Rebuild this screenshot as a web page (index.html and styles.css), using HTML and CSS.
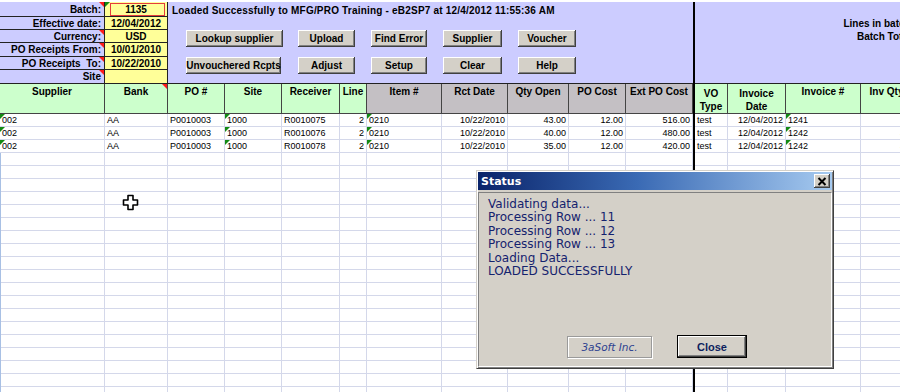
FILE: index.html
```html
<!DOCTYPE html>
<html>
<head>
<meta charset="utf-8">
<link rel="stylesheet" href="styles.css">
</head>
<body>
<div class="sheet">
  <div class="top">
    <div class="mid">
      <div class="msg">Loaded Successfully to MFG/PRO Training - eB2SP7 at 12/4/2012 11:55:36 AM</div>
      <div class="btns">
        <button class="btn c1">Lookup supplier</button>
        <button class="btn c2">Upload</button>
        <button class="btn c3">Find Error</button>
        <button class="btn c4">Supplier</button>
        <button class="btn c5">Voucher</button>
        <button class="btn c1 short">Unvouchered Rcpts</button>
        <button class="btn c2">Adjust</button>
        <button class="btn c3">Setup</button>
        <button class="btn c4">Clear</button>
        <button class="btn c5">Help</button>
      </div>
    </div>
    <div class="vline"></div>
    <div class="right">
      <div class="totals">
        <div>Lines in batch:</div>
        <div>Batch Total:</div>
      </div>
    </div>
    <div class="lbl nr">Batch:</div><div class="val sel ng">1135</div>
    <div class="lbl">Effective date:</div><div class="val">12/04/2012</div>
    <div class="lbl nr">Currency:</div><div class="val">USD</div>
    <div class="lbl nr">PO Receipts From:</div><div class="val">10/01/2010</div>
    <div class="lbl nr">PO Receipts &nbsp;To:</div><div class="val">10/22/2010</div>
    <div class="lbl nr">Site</div><div class="val"></div>
  </div>

  <div class="grid">
    <div class="vline2"></div>
    <div class="h">Supplier</div>
    <div class="h nr">Bank</div>
    <div class="h">PO #</div>
    <div class="h">Site</div>
    <div class="h">Receiver</div>
    <div class="h">Line</div>
    <div class="h g">Item #</div>
    <div class="h g">Rct Date</div>
    <div class="h g">Qty Open</div>
    <div class="h g">PO Cost</div>
    <div class="h g">Ext PO Cost</div>
    <div class="h two">VO<br>Type</div>
    <div class="h two">Invoice<br>Date</div>
    <div class="h">Invoice #</div>
    <div class="h">Inv Qty</div>

    <div class="c ng">002</div><div class="c">AA</div><div class="c">P0010003</div><div class="c ng">1000</div><div class="c">R0010075</div><div class="c r">2</div><div class="c ng">0210</div><div class="c r">10/22/2010</div><div class="c r">43.00</div><div class="c r">12.00</div><div class="c r">516.00</div><div class="c">test</div><div class="c r">12/04/2012</div><div class="c ng">1241</div><div class="c r"></div>

    <div class="c ng">002</div><div class="c">AA</div><div class="c">P0010003</div><div class="c ng">1000</div><div class="c">R0010076</div><div class="c r">2</div><div class="c ng">0210</div><div class="c r">10/22/2010</div><div class="c r">40.00</div><div class="c r">12.00</div><div class="c r">480.00</div><div class="c">test</div><div class="c r">12/04/2012</div><div class="c ng">1242</div><div class="c r">30</div>

    <div class="c ng">002</div><div class="c">AA</div><div class="c">P0010003</div><div class="c ng">1000</div><div class="c">R0010078</div><div class="c r">2</div><div class="c ng">0210</div><div class="c r">10/22/2010</div><div class="c r">35.00</div><div class="c r">12.00</div><div class="c r">420.00</div><div class="c">test</div><div class="c r">12/04/2012</div><div class="c ng">1242</div><div class="c r">30</div>

    <div class="fill first"></div><div class="fill"></div><div class="fill"></div><div class="fill"></div><div class="fill"></div><div class="fill"></div><div class="fill"></div><div class="fill"></div><div class="fill"></div><div class="fill"></div><div class="fill"></div><div class="fill"></div><div class="fill"></div><div class="fill"></div><div class="fill"></div>
  </div>
</div>

<div class="dialog">
  <div class="titlebar">
    <span class="title">Status</span>
    <button class="xbtn" aria-label="Close">
      <svg width="10" height="9" viewBox="0 0 10 9"><path d="M1.5 1 L8.5 8 M8.5 1 L1.5 8" stroke="#000" stroke-width="2" fill="none"/></svg>
    </button>
  </div>
  <div class="panel">
    <div class="log">
      <div>Validating data...</div>
      <div>Processing Row ... 11</div>
      <div>Processing Row ... 12</div>
      <div>Processing Row ... 13</div>
      <div>Loading Data...</div>
      <div>LOADED SUCCESSFULLY</div>
    </div>
    <div class="actions">
      <span class="brand">3aSoft Inc.</span>
      <button class="closebtn">Close</button>
    </div>
  </div>
</div>

<svg class="cursor" width="17" height="17" viewBox="0 0 17 17">
  <path d="M6 1.5 H11 V6 H15.5 V11 H11 V15.5 H6 V11 H1.5 V6 H6 Z" fill="#fff" stroke="#000" stroke-width="1.6" stroke-linejoin="round"/>
</svg>
</body>
</html>
```

FILE: styles.css
```css
* { box-sizing: border-box; }

body {
  margin: 0;
  width: 900px;
  height: 392px;
  overflow: hidden;
  position: relative;
  background: #fff;
  font-family: "Liberation Sans", Arial, sans-serif;
  color: #000;
}

.sheet {
  width: 900px;
  overflow: hidden;
}

/* ---------- top form area ---------- */
.top {
  display: grid;
  grid-template-columns: 105px 63px 525px 2px 205px;
  grid-template-rows: 15px 13px 13px 14px 13px 14px;
  padding-top: 2px;
  background: #fff;
}

.lbl {
  background: #ccccff;
  border-right: 1px solid #222;
  border-bottom: 1px solid #222;
  display: flex;
  align-items: center;
  justify-content: flex-end;
  padding-right: 3px;
  font-weight: bold;
  font-size: 10px;
  white-space: nowrap;
  position: relative;
}

.val {
  background: #ffff99;
  border-right: 1px solid #222;
  border-bottom: 1px solid #222;
  display: flex;
  align-items: center;
  justify-content: center;
  font-weight: bold;
  font-size: 10px;
  position: relative;
}

.sel::after {
  content: "";
  position: absolute;
  left: 5px;
  top: 1px;
  right: 2px;
  bottom: 0;
  border: 1px solid #e43c3c;
}

.mid {
  grid-column: 3;
  grid-row: 1 / span 6;
  background: #ccccff;
  border-bottom: 1px solid #222;
  padding: 2px 0 0 4px;
}

.msg {
  font-weight: bold;
  font-size: 10px;
  letter-spacing: 0.2px;
  line-height: 13px;
  white-space: nowrap;
}

.btns {
  display: grid;
  grid-template-columns: 112px 73px 72px 75px 58px;
  row-gap: 10px;
  margin: 13px 0 0 14px;
}

.btn {
  height: 17px;
  padding: 0;
  border: 0;
  background: #d4d0c8;
  font-family: "Liberation Sans", Arial, sans-serif;
  font-weight: bold;
  font-size: 10px;
  color: #000;
  box-shadow: inset -1px -1px #404040, inset 1px 1px #fff, inset -2px -2px #808080;
}
.c1 { width: 97px; }
.c1.short { width: 95px; }
.c2 { width: 57px; }
.c3 { width: 56px; }
.c4 { width: 59px; }
.c5 { width: 58px; }

.vline {
  grid-column: 4;
  grid-row: 1 / span 6;
  background: #000;
}

.right {
  grid-column: 5;
  grid-row: 1 / span 6;
  background: #ccccff;
  border-bottom: 1px solid #222;
  overflow: hidden;
}

.totals {
  width: 219px;
  margin-top: 15px;
  text-align: right;
  font-weight: bold;
  font-size: 10px;
  line-height: 13px;
  white-space: nowrap;
}

/* ---------- sheet grid ---------- */
.grid {
  display: grid;
  grid-template-columns: 105px 63px 57px 57px 58px 27px 75px 66px 61px 57px 67px 2px 33px 58px 75px 52px;
  grid-template-rows: 30px 13px 13px 13px 239px;
  width: 913px;
}

.vline2 {
  grid-column: 12;
  grid-row: 1 / -1;
  background: #000;
}

.h {
  background: #ccffcc;
  border-right: 1px solid #444;
  border-bottom: 1px solid #444;
  font-weight: bold;
  font-size: 10px;
  line-height: 12px;
  text-align: center;
  padding-top: 2px;
  white-space: nowrap;
  position: relative;
}
.h.g { background: #c4c0c4; }
.h.two { padding-top: 3px; line-height: 13px; }

.c {
  border-right: 1px solid #d4d8ea;
  border-bottom: 1px solid #d4d8ea;
  font-size: 9px;
  line-height: 12px;
  padding: 0 2px;
  white-space: nowrap;
  overflow: hidden;
  position: relative;
}
.c.r { text-align: right; }

.fill {
  border-right: 1px solid #d4d8ea;
  background: repeating-linear-gradient(to bottom, transparent 0, transparent 12px, #d4d8ea 12px, #d4d8ea 13px);
}
.fill.first { border-left: 1px solid #a8c0e4; }

/* comment indicators */
.ng::before {
  content: "";
  position: absolute;
  left: 0;
  top: 0;
  border-top: 5px solid #138a13;
  border-right: 5px solid transparent;
}
.nr::after {
  content: "";
  position: absolute;
  right: 0;
  top: 0;
  border-top: 5px solid #ff1a1a;
  border-left: 5px solid transparent;
}

/* ---------- dialog ---------- */
.dialog {
  position: absolute;
  left: 476px;
  top: 170px;
  width: 358px;
  height: 199px;
  background: #d4d0c8;
  border: 1px solid;
  border-color: #d4d0c8 #404040 #404040 #d4d0c8;
  box-shadow: inset 1px 1px #fff, inset -1px -1px #808080;
  padding: 1px;
  display: flex;
  flex-direction: column;
}

.titlebar {
  height: 18px;
  background: linear-gradient(to right, #0a246a, #3a6ab4 45%, #a6caf0);
  display: flex;
  align-items: center;
  justify-content: space-between;
  padding: 0 2px 0 3px;
}

.title {
  color: #fff;
  font-family: "DejaVu Sans", Verdana, sans-serif;
  font-weight: bold;
  font-size: 11px;
}

.xbtn {
  width: 16px;
  height: 14px;
  padding: 0;
  border: 0;
  background: #d4d0c8;
  box-shadow: inset -1px -1px #404040, inset 1px 1px #fff, inset -2px -2px #808080;
  display: flex;
  align-items: center;
  justify-content: center;
}

.panel {
  flex: 1;
  margin-top: 2px;
  border: 1px solid;
  border-color: #808080 #fff #fff #808080;
  display: flex;
  flex-direction: column;
  padding: 5px 0 8px 9px;
}

.log {
  font-family: "DejaVu Sans", Verdana, sans-serif;
  font-size: 12px;
  line-height: 13.4px;
  color: #14226e;
  white-space: nowrap;
}

.actions {
  margin-top: auto;
  display: flex;
  align-items: center;
  gap: 25px;
  padding-left: 79px;
}

.brand {
  width: 85px;
  height: 22px;
  border: 1px solid #9a9a9a;
  box-shadow: inset 1px 1px #fff, 1px 1px #fff;
  display: flex;
  align-items: center;
  justify-content: center;
  font-family: "DejaVu Sans", Verdana, sans-serif;
  font-style: italic;
  font-size: 10.5px;
  color: #2e4290;
}

.closebtn {
  width: 70px;
  height: 23px;
  padding: 0;
  border: 1px solid #000;
  background: #d4d0c8;
  box-shadow: inset -1px -1px #404040, inset 1px 1px #fff, inset -2px -2px #808080;
  font-family: "Liberation Sans", Arial, sans-serif;
  font-weight: bold;
  font-size: 11px;
  color: #0d1f5e;
}

.cursor {
  position: absolute;
  left: 122px;
  top: 194px;
}
```
